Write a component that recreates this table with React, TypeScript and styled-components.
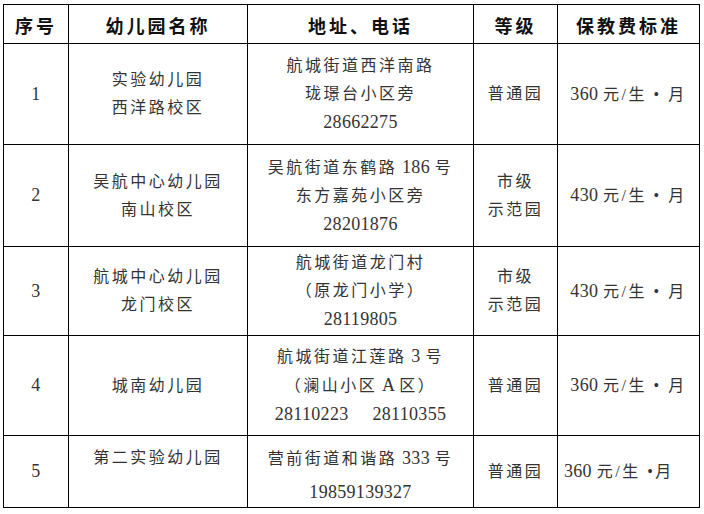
import React from "react";
import styled, { createGlobalStyle } from "styled-components";

const Global = createGlobalStyle`
  html, body { margin: 0; padding: 0; background: #fff; }
  body { font-family: "Liberation Serif", "Noto Sans CJK SC", serif; }
`;

const Page = styled.div`
  padding: 4px 0 0 3px;
`;

const Table = styled.table`
  border-collapse: collapse;
  table-layout: fixed;
  width: 696px;
`;

const HeadCell = styled.th`
  border: 1px solid #000;
  height: 37px;
  padding: 1px 0 0;
  font-family: "Noto Sans CJK SC", sans-serif;
  font-weight: 700;
  font-size: 18px;
  letter-spacing: 3px;
  color: #111;
  text-align: center;
  vertical-align: middle;
`;

const Row = styled.tr<{ $h: number }>`
  height: ${(p) => p.$h}px;
`;

const Cell = styled.td<{ $top?: boolean; $left?: boolean }>`
  border: 1px solid #000;
  padding: ${(p) => (p.$top ? "8px 0 0" : "0")};
  padding-left: ${(p) => (p.$left ? "6px" : "0")};
  text-align: ${(p) => (p.$left ? "left" : "center")};
  vertical-align: ${(p) => (p.$top ? "top" : "middle")};
  color: #333;
  font-size: 16px;
  line-height: 28px;
`;

const Cjk = styled.span`
  font-family: "Liberation Serif", "Noto Sans CJK SC", serif;
  font-weight: 400;
  letter-spacing: 2.5px;
`;

const Num = styled.span`
  font-family: "Liberation Serif", serif;
  font-size: 18px;
  letter-spacing: 0.3px;
`;

const Line = styled.div<{ $gap?: number }>`
  margin-top: ${(p) => p.$gap ?? 0}px;
  white-space: nowrap;
`;

const Fee = ({ n, tight }: { n: string; tight?: boolean }) => (
  <Line>
    <Num>{n} </Num>
    <Cjk>元/生{tight ? " •" : " • "}月</Cjk>
  </Line>
);

export default function App() {
  return (
    <Page>
      <Global />
      <Table>
        <colgroup>
          <col style={{ width: 65 }} />
          <col style={{ width: 179 }} />
          <col style={{ width: 226 }} />
          <col style={{ width: 84 }} />
          <col style={{ width: 142 }} />
        </colgroup>
        <thead>
          <tr>
            <HeadCell>序号</HeadCell>
            <HeadCell>幼儿园名称</HeadCell>
            <HeadCell>地址、电话</HeadCell>
            <HeadCell>等级</HeadCell>
            <HeadCell>保教费标准</HeadCell>
          </tr>
        </thead>
        <tbody>
          <Row $h={101}>
            <Cell><Num>1</Num></Cell>
            <Cell>
              <Line><Cjk>实验幼儿园</Cjk></Line>
              <Line><Cjk>西洋路校区</Cjk></Line>
            </Cell>
            <Cell>
              <Line><Cjk>航城街道西洋南路</Cjk></Line>
              <Line><Cjk>珑璟台小区旁</Cjk></Line>
              <Line><Num>28662275</Num></Line>
            </Cell>
            <Cell><Cjk>普通园</Cjk></Cell>
            <Cell><Fee n="360" /></Cell>
          </Row>
          <Row $h={102}>
            <Cell><Num>2</Num></Cell>
            <Cell>
              <Line><Cjk>吴航中心幼儿园</Cjk></Line>
              <Line><Cjk>南山校区</Cjk></Line>
            </Cell>
            <Cell>
              <Line><Cjk>吴航街道东鹤路</Cjk><Num> 186 </Num><Cjk>号</Cjk></Line>
              <Line><Cjk>东方嘉苑小区旁</Cjk></Line>
              <Line><Num>28201876</Num></Line>
            </Cell>
            <Cell>
              <Line><Cjk>市级</Cjk></Line>
              <Line><Cjk>示范园</Cjk></Line>
            </Cell>
            <Cell><Fee n="430" /></Cell>
          </Row>
          <Row $h={89}>
            <Cell><Num>3</Num></Cell>
            <Cell>
              <Line><Cjk>航城中心幼儿园</Cjk></Line>
              <Line><Cjk>龙门校区</Cjk></Line>
            </Cell>
            <Cell>
              <Line><Cjk>航城街道龙门村</Cjk></Line>
              <Line><Cjk>（原龙门小学）</Cjk></Line>
              <Line><Num>28119805</Num></Line>
            </Cell>
            <Cell>
              <Line><Cjk>市级</Cjk></Line>
              <Line><Cjk>示范园</Cjk></Line>
            </Cell>
            <Cell><Fee n="430" /></Cell>
          </Row>
          <Row $h={100}>
            <Cell><Num>4</Num></Cell>
            <Cell><Cjk>城南幼儿园</Cjk></Cell>
            <Cell>
              <Line><Cjk>航城街道江莲路</Cjk><Num> 3 </Num><Cjk>号</Cjk></Line>
              <Line><Cjk>（澜山小区</Cjk><Num> A </Num><Cjk>区）</Cjk></Line>
              <Line><Num>28110223&nbsp;&nbsp;&nbsp;&nbsp;&nbsp;28110355</Num></Line>
            </Cell>
            <Cell><Cjk>普通园</Cjk></Cell>
            <Cell><Fee n="360" /></Cell>
          </Row>
          <Row $h={70}>
            <Cell><Num>5</Num></Cell>
            <Cell $top>
              <Line><Cjk>第二实验幼儿园</Cjk></Line>
            </Cell>
            <Cell $top>
              <Line><Cjk>营前街道和谐路</Cjk><Num> 333 </Num><Cjk>号</Cjk></Line>
              <Line $gap={5}><Num>19859139327</Num></Line>
            </Cell>
            <Cell><Cjk>普通园</Cjk></Cell>
            <Cell $left><Fee n="360" tight /></Cell>
          </Row>
        </tbody>
      </Table>
    </Page>
  );
}
